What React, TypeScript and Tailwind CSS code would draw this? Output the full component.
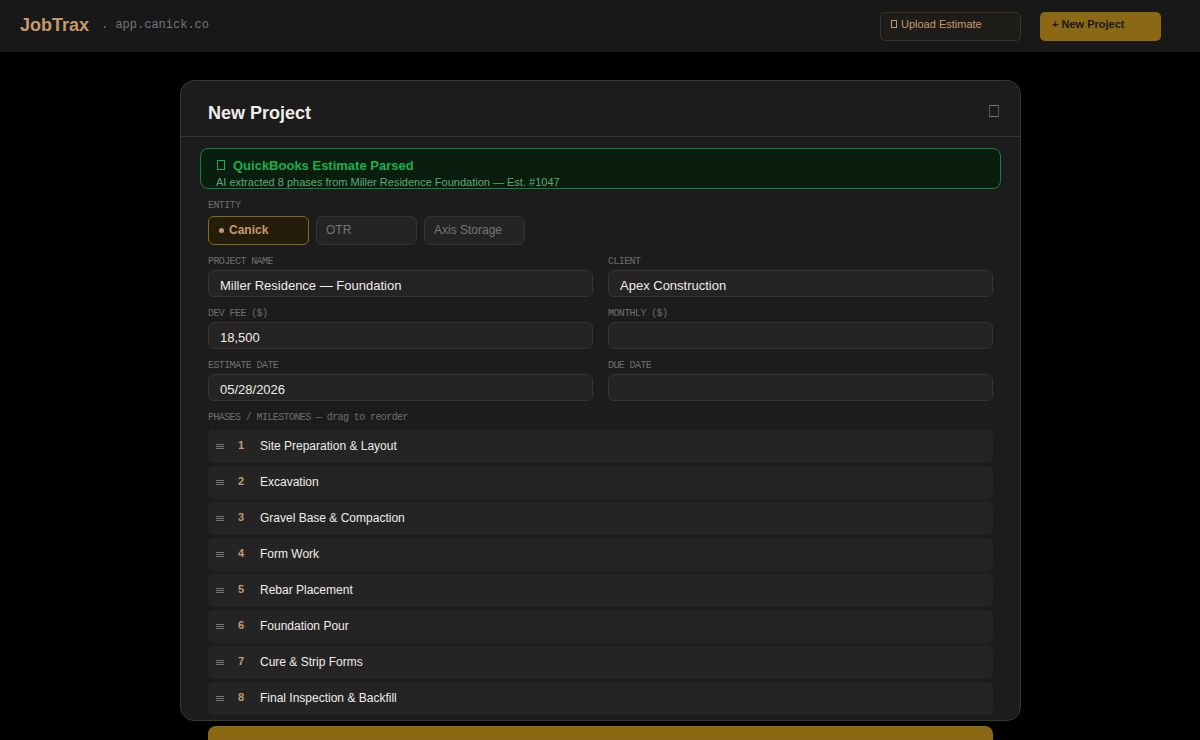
import clsx from "clsx";

const entities = ["Canick", "OTR", "Axis Storage"];

const fields: { label: string; value: string }[] = [
  { label: "PROJECT NAME", value: "Miller Residence — Foundation" },
  { label: "CLIENT", value: "Apex Construction" },
  { label: "DEV FEE ($)", value: "18,500" },
  { label: "MONTHLY ($)", value: "" },
  { label: "ESTIMATE DATE", value: "05/28/2026" },
  { label: "DUE DATE", value: "" },
];

const phases = [
  "Site Preparation & Layout",
  "Excavation",
  "Gravel Base & Compaction",
  "Form Work",
  "Rebar Placement",
  "Foundation Pour",
  "Cure & Strip Forms",
  "Final Inspection & Backfill",
];

function Label({ children }: { children: string }) {
  return (
    <div className="h-3 font-['Liberation_Mono',monospace] text-[10px] leading-[14px] tracking-[-0.6px] whitespace-pre text-[#6e6e6e]">
      {children}
    </div>
  );
}

function TopBar() {
  return (
    <header className="flex h-[52px] items-start bg-[#181818] pr-[39px] pl-5">
      <div className="mt-[15px] w-[81px] text-lg leading-5 font-bold text-[#c49a6c]">
        JobTrax
      </div>
      <div className="mt-[17px] font-['Liberation_Mono',monospace] text-xs leading-4 text-[#757575]">
        . app.canick.co
      </div>
      <button className="mt-3 ml-auto flex h-[29px] w-[141px] items-start rounded-[5px] border border-[#3a322c] bg-[#1e1c18] pt-1 pl-[10px] text-[11px] leading-[14px] text-[#c49a6c]">
        <span className="mt-[3px] mr-[4px] h-2 w-[6px] border border-current" />
        Upload Estimate
      </button>
      <button className="mt-3 ml-[19px] flex h-[29px] w-[121px] items-start rounded-[5px] bg-[#8b6914] pt-[5px] pl-3 text-[11px] leading-[14px] font-bold text-[#181818]">
        + New Project
      </button>
    </header>
  );
}

function ParsedBanner() {
  return (
    <div className="mx-[19px] mt-[11px] h-[41px] rounded-lg border border-[#15803d] bg-[#0a1e10] pt-[9px] pl-[15px]">
      <div className="flex h-[17px] items-start text-[13px] leading-4 font-bold text-[#18b04f]">
        <span className="mt-[2px] ml-px mr-2 h-[10px] w-2 border border-current" />
        QuickBooks Estimate Parsed
      </div>
      <div className="h-[14px] text-[11px] leading-[14px] whitespace-nowrap text-[#5fa873]">
        AI extracted 8 phases from Miller Residence Foundation — Est. #1047
      </div>
    </div>
  );
}

function PhaseRow({ index, name }: { index: number; name: string }) {
  return (
    <li className="flex h-[33px] items-start rounded-[5px] bg-[#242424]">
      <svg
        className="mt-[14px] ml-2 h-[5px] w-2 text-[#757575]"
        viewBox="0 0 8 5"
        stroke="currentColor"
        shapeRendering="crispEdges"
      >
        <path d="M0 .5H8M0 2.5H8M0 4.5H8" />
      </svg>
      <span className="mt-2 ml-[14px] w-[22px] text-[11px] leading-[14px] font-bold text-[#c49a6c]">
        {index}
      </span>
      <span className="mt-2 text-xs leading-4 text-[#f0ede8]">{name}</span>
    </li>
  );
}

export default function App() {
  return (
    <div className="h-[740px] w-[1200px] overflow-hidden bg-black font-['Liberation_Sans',Arial,sans-serif]">
      <TopBar />

      <main className="mt-7 ml-[180px] h-[641px] w-[841px] rounded-[14px] border border-[#3a3632] bg-[#1c1c1c]">
        <div className="flex h-14 items-start justify-between border-b border-[#3a322c] pr-[21px] pl-[27px]">
          <h1 className="mt-[22px] text-lg leading-5 font-bold text-[#f0ede8]">
            New Project
          </h1>
          <button
            aria-label="Close"
            className="mt-6 h-3 w-[10px] border border-x-[#555555] border-y-[#757575]"
          />
        </div>

        <ParsedBanner />

        <div className="px-[27px] pt-[10px]">
          <Label>ENTITY</Label>
          <div className="mt-[5px] flex gap-[7px]">
            {entities.map((name, i) => (
              <button
                key={name}
                className={clsx(
                  "flex h-[29px] w-[101px] items-start rounded-md border pt-[5px] pl-[9px] text-xs leading-4",
                  i === 0
                    ? "border-[#8b6914] bg-[#241d0c] font-bold text-[#c49a6c]"
                    : "border-[#3a322c] bg-[#242424] text-[#757575]",
                )}
              >
                {i === 0 && (
                  <span className="mt-[6px] mr-[5px] ml-px size-[5px] rounded-full bg-current" />
                )}
                {name}
              </button>
            ))}
          </div>

          <div className="mt-[10px] grid grid-cols-2 gap-x-[15px] gap-y-[10px]">
            {fields.map(({ label, value }) => (
              <div key={label}>
                <Label>{label}</Label>
                <div className="mt-[3px] h-[27px] rounded-md border border-[#3a322c] bg-[#242424] pt-[7px] pl-[11px] text-[13px] leading-4 text-[#f0ede8]">
                  {value}
                </div>
              </div>
            ))}
          </div>

          <div className="mt-[10px]">
            <Label>PHASES / MILESTONES — drag to reorder</Label>
          </div>
          <ul className="mt-[7px] flex flex-col gap-[3px]">
            {phases.map((name, i) => (
              <PhaseRow key={name} index={i + 1} name={name} />
            ))}
          </ul>

          <button className="mt-[11px] block h-[45px] w-full rounded-lg bg-[#8b6914]" />
        </div>
      </main>
    </div>
  );
}
